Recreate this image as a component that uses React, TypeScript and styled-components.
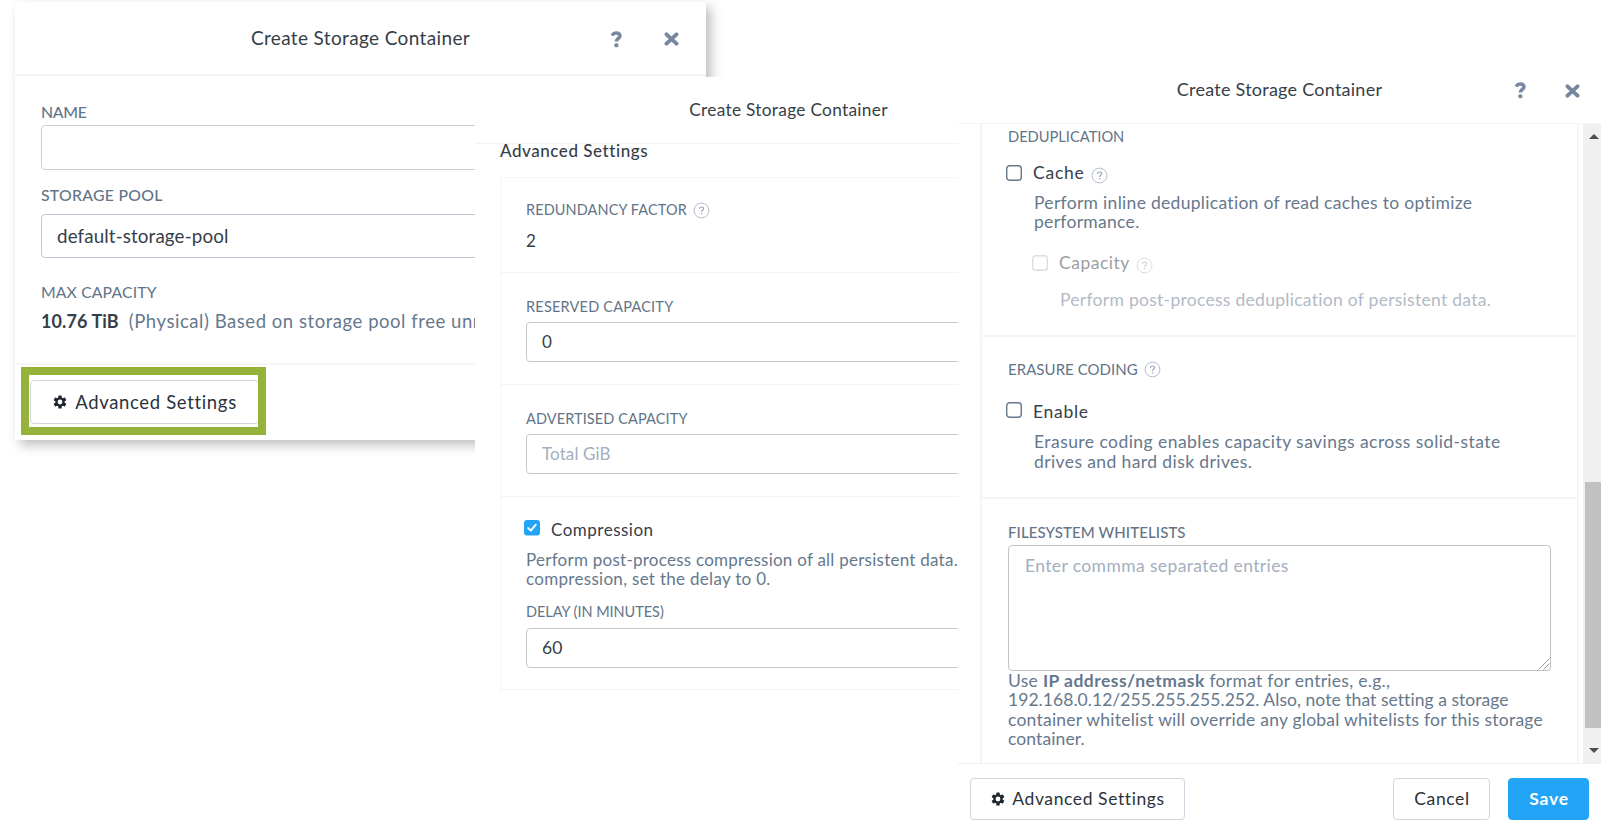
import React from 'react';
import styled, { createGlobalStyle } from 'styled-components';

const GlobalStyle = createGlobalStyle`
  *, *::before, *::after { box-sizing: border-box; }
  body { margin: 0; background: #fff; font-family: Lato, "Open Sans", sans-serif; }
  input, textarea, button { font-family: inherit; }
`;

const ink = '#363e48';
const slate = '#66788c';
const labelInk = '#627488';

const Stage = styled.main`
  position: relative;
  width: 1614px;
  height: 829px;
  overflow: hidden;
  background: #fff;
`;

const Dialog = styled.section<{ $x: number; $y: number; $w: number; $h: number; $raised?: boolean }>`
  position: absolute;
  left: ${p => p.$x}px;
  top: ${p => p.$y}px;
  width: ${p => p.$w}px;
  height: ${p => p.$h}px;
  display: flex;
  flex-direction: column;
  background: #fff;
  box-shadow: ${p => (p.$raised ? '5px 5px 11px rgba(0, 0, 0, 0.26)' : 'none')};
`;

const Header = styled.header<{ $h: number; $line?: number }>`
  flex: none;
  display: grid;
  grid-template-columns: 1fr auto 1fr;
  align-items: center;
  height: ${p => p.$h + (p.$line ?? 1)}px;
  border-bottom: ${p => p.$line ?? 1}px solid #f3f4f5;
`;

const Text = styled.span<{ $size: number; $ls?: number; $color?: string; $weight?: number }>`
  font-size: ${p => p.$size}px;
  letter-spacing: ${p => p.$ls ?? 0}px;
  font-weight: ${p => p.$weight ?? 400};
  color: ${p => p.$color ?? ink};
  line-height: 20px;
  white-space: nowrap;
`;

const Title = styled(Text).attrs({ as: 'h2' })<{ $lift?: number }>`
  grid-column: 2;
  margin: 0;
  padding-bottom: ${p => p.$lift ?? 0}px;
`;

const HeaderActions = styled.div<{ $gap: number; $right: number; $drop: number }>`
  grid-column: 3;
  justify-self: end;
  display: flex;
  align-items: center;
  gap: ${p => p.$gap}px;
  padding: ${p => p.$drop}px ${p => p.$right}px 0 0;
`;

const IconButton = styled.button`
  display: flex;
  padding: 0;
  border: 0;
  background: none;
  svg { display: block; }
`;

const Body = styled.div<{ $h: number; $pad: string }>`
  flex: none;
  height: ${p => p.$h}px;
  padding: ${p => p.$pad};
`;

const LabelRow = styled.div<{ $top?: number }>`
  display: flex;
  align-items: center;
  gap: 6px;
  height: 20px;
  margin-top: ${p => p.$top ?? 0}px;
`;

const SectionTitle = styled.h3`
  height: 14px;
  margin: 0;
  font-size: 17px;
  font-weight: 500;
  line-height: 14px;
  letter-spacing: 0.55px;
  color: ${ink};
`;

const Input = styled.input<{ $top: number; $h: number; $size: number; $ls?: number; $line?: number; $border?: string }>`
  display: block;
  width: 100%;
  height: ${p => p.$h}px;
  margin: ${p => p.$top}px 0 0;
  padding: 0 15px 1px;
  border: ${p => p.$line ?? 1}px solid ${p => p.$border ?? '#c6c8ca'};
  border-radius: 4px;
  background: #fff;
  color: ${ink};
  font-size: ${p => p.$size}px;
  letter-spacing: ${p => p.$ls ?? 0}px;
  outline: none;
  &::placeholder { color: #a3afc0; opacity: 1; }
`;

const CapacityValue = styled.div`
  display: flex;
  gap: 10px;
  height: 20px;
  margin-top: 9px;
`;

const Footer = styled.footer<{ $pad: string; $line: string }>`
  flex: 1;
  display: flex;
  align-items: flex-start;
  justify-content: space-between;
  padding: ${p => p.$pad};
  border-top: ${p => p.$line};
`;

const ButtonGroup = styled.div`
  display: flex;
  gap: 18px;
`;

const Button = styled.button<{ $w: number; $h: number; $size: number; $ls: number; $primary?: boolean; $gap?: number }>`
  display: flex;
  align-items: center;
  justify-content: center;
  gap: ${p => p.$gap ?? 0}px;
  flex: none;
  width: ${p => p.$w}px;
  height: ${p => p.$h}px;
  padding: 0 0 1px 1px;
  border: 1px solid ${p => (p.$primary ? '#22a5f7' : '#d0d5df')};
  border-radius: 4px;
  background: ${p => (p.$primary ? '#22a5f7' : '#fff')};
  color: ${p => (p.$primary ? '#fff' : '#2b323b')};
  font-size: ${p => p.$size}px;
  font-weight: ${p => (p.$primary ? 700 : 400)};
  letter-spacing: ${p => p.$ls}px;
  white-space: nowrap;
`;

const Highlighted = styled.div`
  position: relative;
  &::after {
    content: '';
    position: absolute;
    left: -9px;
    top: -13px;
    width: 245px;
    height: 68px;
    border: 8px solid #95b23b;
  }
`;

const SettingsBox = styled.div<{ $top?: number; $line: number; $topLine?: boolean; $h: number }>`
  height: ${p => p.$h}px;
  margin-top: ${p => p.$top ?? 0}px;
  border: ${p => p.$line}px solid #f4f5f6;
  border-bottom: 0;
  border-top-width: ${p => (p.$topLine ? 1 : 0)}px;
`;

const Section = styled.div<{ $h?: number; $line?: number; $pad: string }>`
  height: ${p => (p.$h ? `${p.$h}px` : 'auto')};
  padding: ${p => p.$pad};
  border-bottom: ${p => p.$line ?? 1}px solid #f3f4f5;
`;

const CheckRow = styled.label<{ $top?: number; $left?: number; $disabled?: boolean; $drop?: number }>`
  display: flex;
  align-items: flex-start;
  height: 20px;
  margin: ${p => p.$top ?? 0}px 0 0 ${p => p.$left ?? -2}px;
  opacity: ${p => (p.$disabled ? 0.5 : 1)};
  > svg:first-child {
    margin: ${p => p.$drop ?? 0}px 11px 0 0;
    opacity: ${p => (p.$disabled ? 0.45 : 1)};
  }
  > svg:last-child:not(:first-child) { margin: 4px 0 0 6px; }
`;

const Help = styled.p<{ $top: number; $left?: number; $lh: number; $size: number; $faded?: boolean }>`
  margin: ${p => p.$top}px 0 0 ${p => p.$left ?? 0}px;
  font-size: ${p => p.$size}px;
  line-height: ${p => p.$lh}px;
  color: ${slate};
  opacity: ${p => (p.$faded ? 0.5 : 1)};
`;

const HelpLine = styled.span<{ $ls: number }>`
  display: block;
  white-space: nowrap;
  letter-spacing: ${p => p.$ls}px;
  b { font-weight: 700; letter-spacing: 0.47px; }
`;

const ScrollArea = styled.div`
  flex: none;
  display: flex;
  height: 639px;
  padding-left: 22px;
`;

const ScrollContent = styled.div`
  width: 599px;
  margin-right: 4px;
`;

const Scrollbar = styled.div`
  width: 18px;
  display: flex;
  flex-direction: column;
  align-items: flex-end;
  background: #f0f0f0;
`;

const ScrollThumb = styled.div`
  width: 16px;
  height: 246px;
  margin-top: 343px;
  background: #c1c1c1;
`;

const ScrollArrow = styled.svg<{ $top: number }>`
  display: block;
  width: 10px;
  height: 5px;
  margin: ${p => p.$top}px 2px 0 0;
`;

const AreaWrap = styled.div`
  position: relative;
  height: 126px;
  margin-top: 3px;
`;

const TextArea = styled.textarea`
  display: block;
  width: 100%;
  height: 126px;
  padding: 10px 16px;
  border: 1px solid #c3c4c6;
  border-radius: 4px;
  resize: none;
  outline: none;
  background: #fff;
  font-size: 17.5px;
  line-height: 20px;
  letter-spacing: 0.38px;
  &::placeholder { color: #a3afc0; opacity: 1; }
`;

const ResizeGrip = styled.svg`
  position: absolute;
  right: 1px;
  bottom: 1px;
`;

const QuestionIcon = () => (
  <svg width="11" height="17" viewBox="0 0 11 17" fill="none">
    <path d="M1.2 4.6C1.9 2.8 3.2 2 5 2c2.4 0 3.9 1 3.9 2.9 0 2.5-3.5 2.6-3.5 5.6" stroke="#7889a0" strokeWidth="3.6" />
    <rect x="3.3" y="12.3" width="4.1" height="4" rx="1.5" fill="#7889a0" />
  </svg>
);

const CloseIcon = () => (
  <svg width="15" height="14" viewBox="0 0 15 14" fill="none">
    <path d="M2.5 2.3L12.5 11.7M12.5 2.3L2.5 11.7" stroke="#7588a0" strokeWidth="3.9" strokeLinecap="round" />
  </svg>
);

const HelpIcon = () => (
  <svg width="17" height="17" viewBox="0 0 17 17" fill="none">
    <circle cx="8.5" cy="8.5" r="7.4" stroke="#b3bdca" />
    <path d="M6.4 6.9C6.5 5.6 7.3 5 8.5 5c1.3 0 2.1.7 2.1 1.8 0 1.5-2 1.5-2 3.1" stroke="#9aa8b9" strokeWidth="1.2" />
    <circle cx="8.6" cy="11.8" r="0.8" fill="#9aa8b9" />
  </svg>
);

const GearIcon = () => (
  <svg width="14" height="14" viewBox="-7 -7 14 14" fill="none">
    {[0, 60, 120].map(a => (
      <rect key={a} x="-1.7" y="-6.5" width="3.4" height="13" rx="0.6" fill="#1f262e" transform={`rotate(${a})`} />
    ))}
    <circle r="4.7" fill="#1f262e" />
    <circle r="2.4" fill="#fff" />
  </svg>
);

const CheckBox = ({ checked = false }: { checked?: boolean }) => (
  <svg width="16" height="16" viewBox="0 0 16 16" fill="none">
    {checked ? (
      <>
        <rect width="16" height="15.5" rx="3" fill="#22a5f7" />
        <path d="M4.2 8.1l2.6 2.5 5-5.9" stroke="#fff" strokeWidth="2" strokeLinecap="round" strokeLinejoin="round" />
      </>
    ) : (
      <rect x="0.7" y="0.7" width="14.6" height="14.6" rx="3" stroke="#64778d" strokeWidth="1.4" />
    )}
  </svg>
);

const Actions = ({ gap, right, drop }: { gap: number; right: number; drop: number }) => (
  <HeaderActions $gap={gap} $right={right} $drop={drop}>
    <IconButton aria-label="Help"><QuestionIcon /></IconButton>
    <IconButton aria-label="Close"><CloseIcon /></IconButton>
  </HeaderActions>
);

const BasicDialog = () => (
  <Dialog $x={15} $y={2} $w={691} $h={438} $raised>
    <Header $h={72} $line={2}>
      <Title $size={19} $ls={0.36}>Create Storage Container</Title>
      <Actions gap={42} right={27} drop={2} />
    </Header>
    <Body $h={287} $pad="26px 26px 0">
      <LabelRow><Text $size={15.8} $ls={-0.25} $color={labelInk} $weight={500}>NAME</Text></LabelRow>
      <Input $top={3} $h={45} $size={19} $line={1.5} $border="#cbcdcf" aria-label="Name" />
      <LabelRow $top={15}><Text $size={15.8} $ls={0.28} $color={labelInk} $weight={500}>STORAGE POOL</Text></LabelRow>
      <Input $top={9} $h={44} $size={18.8} $ls={0.12} $line={1.5} $border="#c0c6d3" defaultValue="default-storage-pool" />
      <LabelRow $top={24}><Text $size={15.8} $ls={0.12} $color={labelInk}>MAX CAPACITY</Text></LabelRow>
      <CapacityValue>
        <Text $size={18} $ls={0.1} $weight={700}>10.76 TiB</Text>
        <Text $size={18.5} $ls={0.54} $color={slate}>(Physical) Based on storage pool free unreserved</Text>
      </CapacityValue>
    </Body>
    <Footer $pad="15px 15px 0" $line="2px solid #f5f6f7">
      <Highlighted>
        <Button $w={229} $h={44} $size={18.5} $ls={0.66} $gap={8}><GearIcon />Advanced Settings</Button>
      </Highlighted>
    </Footer>
  </Dialog>
);

const AdvancedDialog = () => (
  <Dialog $x={475} $y={77} $w={627} $h={615}>
    <Header $h={66}>
      <Title $size={17.3} $ls={0.29}>Create Storage Container</Title>
    </Header>
    <Body $h={548} $pad="0 0 0 25px">
      <SectionTitle>Advanced Settings</SectionTitle>
      <SettingsBox $top={19} $line={1} $topLine $h={515}>
        <Section $h={95} $pad="22px 25px 0">
          <LabelRow>
            <Text $size={14.5} $ls={0.1} $color={labelInk}>REDUNDANCY FACTOR</Text>
            <HelpIcon />
          </LabelRow>
          <LabelRow $top={11}><Text $size={17}>2</Text></LabelRow>
        </Section>
        <Section $h={112} $pad="24px 25px 0">
          <LabelRow><Text $size={14.5} $ls={0.21} $color={labelInk}>RESERVED CAPACITY</Text></LabelRow>
          <Input $top={5} $h={40} $size={17} defaultValue="0" />
        </Section>
        <Section $h={112} $pad="24px 25px 0">
          <LabelRow><Text $size={14.5} $ls={0.11} $color={labelInk}>ADVERTISED CAPACITY</Text></LabelRow>
          <Input $top={5} $h={40} $size={17} $ls={0.1} placeholder="Total GiB" />
        </Section>
        <Section $h={193} $pad="23px 25px 0">
          <CheckRow>
            <CheckBox checked />
            <Text $size={17} $ls={0.5}>Compression</Text>
          </CheckRow>
          <Help $top={10} $lh={19} $size={17}>
            <HelpLine $ls={0.25}>Perform post-process compression of all persistent data.</HelpLine>
            <HelpLine $ls={0.3}>compression, set the delay to 0.</HelpLine>
          </Help>
          <LabelRow $top={14}><Text $size={14.5} $ls={-0.04} $color={labelInk}>DELAY (IN MINUTES)</Text></LabelRow>
          <Input $top={6} $h={40} $size={17.5} $ls={0.2} defaultValue="60" />
        </Section>
      </SettingsBox>
    </Body>
  </Dialog>
);

const OptionsDialog = () => (
  <Dialog $x={958} $y={57} $w={643} $h={772}>
    <Header $h={66}>
      <Title $size={18} $ls={0.25} $lift={2}>Create Storage Container</Title>
      <Actions gap={39} right={21} drop={1} />
    </Header>
    <ScrollArea>
      <ScrollContent>
        <SettingsBox $line={2} $h={639}>
          <Section $h={213} $line={2} $pad="2px 26px 0">
            <LabelRow><Text $size={14.7} $ls={-0.02} $color={labelInk}>DEDUPLICATION</Text></LabelRow>
            <CheckRow $top={17} $drop={2}>
              <CheckBox />
              <Text $size={17.5} $ls={0.75}>Cache</Text>
              <HelpIcon />
            </CheckRow>
            <Help $top={9.5} $left={26} $lh={19.4} $size={17.5}>
              <HelpLine $ls={0.3}>Perform inline deduplication of read caches to optimize</HelpLine>
              <HelpLine $ls={0.3}>performance.</HelpLine>
            </Help>
            <CheckRow $top={22} $left={24} $drop={2} $disabled>
              <CheckBox />
              <Text $size={17.5} $ls={0.5}>Capacity</Text>
              <HelpIcon />
            </CheckRow>
            <Help $top={16.7} $left={52} $lh={19.4} $size={17.5} $faded>
              <HelpLine $ls={0.28}>Perform post-process deduplication of persistent data.</HelpLine>
            </Help>
          </Section>
          <Section $h={162} $line={2} $pad="22px 26px 0">
            <LabelRow>
              <Text $size={15} $ls={0.05} $color={labelInk}>ERASURE CODING</Text>
              <HelpIcon />
            </LabelRow>
            <CheckRow $top={23} $drop={0}>
              <CheckBox />
              <Text $size={17.5} $ls={0.7}>Enable</Text>
            </CheckRow>
            <Help $top={10.3} $left={26} $lh={19.4} $size={17.5}>
              <HelpLine $ls={0.45}>Erasure coding enables capacity savings across solid-state</HelpLine>
              <HelpLine $ls={0.4}>drives and hard disk drives.</HelpLine>
            </Help>
          </Section>
          <Section $line={0} $pad="23px 26px 0">
            <LabelRow><Text $size={15} $ls={0.1} $color={labelInk} $weight={500}>FILESYSTEM WHITELISTS</Text></LabelRow>
            <AreaWrap>
              <TextArea placeholder="Enter commma separated entries" />
              <ResizeGrip width="12" height="12" viewBox="0 0 12 12">
                <path d="M0.5 11.5L11.5 0.5M5.5 11.5L11.5 5.5" stroke="#9a9da1" />
              </ResizeGrip>
            </AreaWrap>
            <Help $top={0} $lh={19.35} $size={17.5}>
              <HelpLine $ls={0.28}>Use <b>IP address/netmask</b> format for entries, e.g.,</HelpLine>
              <HelpLine $ls={0.05}>192.168.0.12/255.255.255.252. Also, note that setting a storage</HelpLine>
              <HelpLine $ls={0.23}>container whitelist will override any global whitelists for this storage</HelpLine>
              <HelpLine $ls={0.1}>container.</HelpLine>
            </Help>
          </Section>
        </SettingsBox>
      </ScrollContent>
      <Scrollbar>
        <ScrollArrow $top={10} viewBox="0 0 10 5"><path d="M0 5L5 0l5 5z" fill="#4d4d4d" /></ScrollArrow>
        <ScrollThumb />
        <ScrollArrow $top={20} viewBox="0 0 10 5"><path d="M0 0h10L5 5z" fill="#4d4d4d" /></ScrollArrow>
      </Scrollbar>
    </ScrollArea>
    <Footer $pad="14px 12px 0" $line="1px solid #ebf1f4">
      <Button $w={215} $h={42} $size={17.5} $ls={0.6} $gap={7}><GearIcon />Advanced Settings</Button>
      <ButtonGroup>
        <Button $w={97} $h={42} $size={17.5} $ls={0.6}>Cancel</Button>
        <Button $w={81} $h={42} $size={17.5} $ls={0.8} $primary>Save</Button>
      </ButtonGroup>
    </Footer>
  </Dialog>
);

export default function App() {
  return (
    <>
      <GlobalStyle />
      <Stage>
        <BasicDialog />
        <AdvancedDialog />
        <OptionsDialog />
      </Stage>
    </>
  );
}
